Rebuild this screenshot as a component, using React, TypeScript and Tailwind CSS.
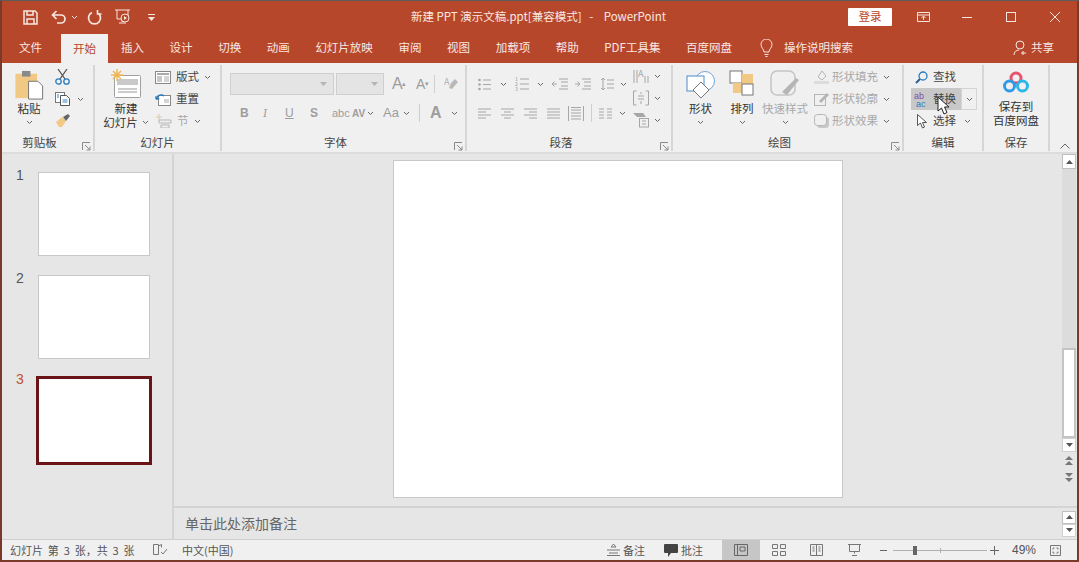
import type { ReactNode } from "react";

const TABS = ["插入", "设计", "切换", "动画", "幻灯片放映", "审阅", "视图", "加载项", "帮助", "PDF工具集", "百度网盘"];

function Chev({ className = "" }: { className?: string }) {
  return (
    <svg width="7" height="5" viewBox="0 0 7 5" className={className}>
      <path d="M1 1l2.500 2.500L6 1" fill="none" stroke="#666" strokeWidth="1" />
    </svg>
  );
}

function Launcher() {
  return (
    <svg width="9" height="9" viewBox="0 0 9 9" className="shrink-0">
      <path d="M.5 8V.5H8M3 3l5 5M8 4.500V8H4.500" fill="none" stroke="#8a8a8a" strokeWidth="1" />
    </svg>
  );
}

function Group({ w, label, launcher, children }: { w: string; label: string; launcher?: boolean; children: ReactNode }) {
  return (
    <div className={`${w} h-full shrink-0 flex flex-col border-r-2 border-[#d6d6d6]`}>
      <div className="h-[70px] shrink-0 flex">{children}</div>
      <div className={`h-[16px] shrink-0 flex items-center text-[11.5px] text-[#444] relative justify-center ${launcher ? "pr-[16px]" : ""}`}>
        {label}
        {launcher && (
          <span className="absolute right-[2px] top-[7px] flex">
            <Launcher />
          </span>
        )}
      </div>
    </div>
  );
}

function SmallRow({ icon, text, chev, dim, className = "" }: { icon: ReactNode; text?: string; chev?: boolean; dim?: boolean; className?: string }) {
  return (
    <div className={`h-[22px] flex items-center gap-[3px] text-[11.5px] ${dim ? "text-[#a8a8a8]" : "text-[#444]"} ${className}`}>
      {icon}
      {text && <span>{text}</span>}
      {chev && <Chev className="ml-[2px]" />}
    </div>
  );
}

function Lines({ kind }: { kind: "left" | "center" | "right" | "justify" }) {
  const rows = {
    left: "M0 1h13M0 4h8M0 7h13M0 10h8",
    center: "M0 1h13M3 4h7M0 7h13M3 10h7",
    right: "M0 1h13M5 4h8M0 7h13M5 10h8",
    justify: "M0 1h13M0 4h13M0 7h13M0 10h13",
  };
  return (
    <svg width="13" height="11" viewBox="0 0 13 11">
      <path d={rows[kind]} stroke="#a6a6a6" strokeWidth="1" fill="none" />
    </svg>
  );
}

function FontGroup() {
  return (
    <Group w="w-[245px]" label="字体" launcher>
      <div className="flex flex-col pl-[8px] pt-[7px]">
        <div className="flex items-center h-[24px]">
          <div className="w-[104px] h-[22px] bg-[#e4e4e4] border border-[#cfcfcf] flex items-center justify-end pr-[6px]">
            <svg width="7" height="4"><path d="M0 0h7L3.500 4z" fill="#b5b5b5" /></svg>
          </div>
          <div className="w-[48px] h-[22px] ml-[2px] bg-[#e4e4e4] border border-[#cfcfcf] flex items-center justify-end pr-[5px]">
            <svg width="7" height="4"><path d="M0 0h7L3.500 4z" fill="#b5b5b5" /></svg>
          </div>
          <span className="ml-[8px] w-[24px] text-[16px] text-[#9d9d9d] leading-none font-['Liberation_Sans',sans-serif]">A<sup className="text-[7px] -ml-px">▴</sup></span>
          <span className="w-[18px] text-[14px] text-[#9d9d9d] leading-none font-['Liberation_Sans',sans-serif]">A<sup className="text-[7px]">▾</sup></span>
          <span className="w-px h-[18px] bg-[#cfcfcf]" />
          <svg width="16" height="16" viewBox="0 0 16 16" className="ml-[8px]">
            <path d="M8 7l4-4 3 3-6 7-3-1z" fill="#b9b9b9" />
            <text x="1" y="9" fontSize="9" fill="#b0b0b0">A</text>
          </svg>
        </div>
        <div className="flex items-center h-[24px] mt-[5px] text-[#9d9d9d] text-[12px] font-['Liberation_Sans',sans-serif]">
          <b className="ml-[10px] w-[23px]">B</b>
          <i className="w-[22px] font-serif">I</i>
          <u className="w-[25px]">U</u>
          <b className="w-[22px]">S</b>
          <span className="w-[20px] text-[11px]">abc</span>
          <span className="w-[14px] text-[10px] font-bold">AV</span>
          <Chev className="ml-[1px]" />
          <span className="ml-[9px] w-[19px] text-[13px]">Aa</span>
          <Chev className="ml-px" />
          <span className="w-px h-[18px] bg-[#cfcfcf] ml-[9px]" />
          <span className="ml-[10px] w-[16px] text-[16px] font-bold">A</span>
          <Chev className="ml-[5px]" />
        </div>
      </div>
    </Group>
  );
}

function ParagraphGroup() {
  const bullets = (
    <svg width="13" height="13" viewBox="0 0 13 13">
      <path d="M5 2h8M5 6.500h8M5 11h8" stroke="#a6a6a6" fill="none" />
      <circle cx="1.500" cy="2" r="1.300" fill="#a6a6a6" />
      <circle cx="1.500" cy="6.500" r="1.300" fill="#a6a6a6" />
      <circle cx="1.500" cy="11" r="1.300" fill="#a6a6a6" />
    </svg>
  );
  const numbered = (
    <svg width="14" height="16" viewBox="0 0 14 16">
      <path d="M5 3h9M5 8h9M5 13h9" stroke="#a6a6a6" fill="none" />
      <text x="0" y="5" fontSize="5" fill="#999">1</text>
      <text x="0" y="10" fontSize="5" fill="#999">2</text>
      <text x="0" y="15" fontSize="5" fill="#999">3</text>
    </svg>
  );
  return (
    <Group w="w-[206px]" label="段落" launcher>
      <div className="flex flex-col pl-[11px] pt-[9px] w-[166px]">
        <div className="flex items-center h-[20px]">
          {bullets}
          <Chev className="ml-[9px]" />
          <span className="w-[8px]" />
          {numbered}
          <Chev className="ml-[8px]" />
          <svg width="16" height="12" viewBox="0 0 16 12" className="ml-[8px]">
            <path d="M7 1h9M9 4h7M9 8h7M7 11h9M5 6H0M2.500 3.500L0 6l2.500 2.500" stroke="#a6a6a6" fill="none" />
          </svg>
          <svg width="16" height="12" viewBox="0 0 16 12" className="ml-[7px]">
            <path d="M7 1h9M9 4h7M9 8h7M7 11h9M0 6h5M2.500 3.500L5 6 2.500 8.500" stroke="#a6a6a6" fill="none" />
          </svg>
          <svg width="14" height="14" viewBox="0 0 14 14" className="ml-[9px]">
            <path d="M3 1v12M1 3l2-2 2 2M1 11l2 2 2-2M7 3h7M7 7h7M7 11h7" stroke="#a6a6a6" fill="none" />
          </svg>
          <Chev className="ml-[6px]" />
        </div>
        <div className="flex items-center h-[20px] mt-[9px]">
          <Lines kind="left" />
          <span className="ml-[10px] flex"><Lines kind="center" /></span>
          <span className="ml-[10px] flex"><Lines kind="right" /></span>
          <span className="ml-[10px] flex"><Lines kind="justify" /></span>
          <svg width="16" height="15" viewBox="0 0 16 15" className="ml-[8px]">
            <path d="M.5 0v15M15.500 0v15M3 4h10M3 7h10M3 10h10M3 13h10M3 1.500h10" stroke="#a6a6a6" fill="none" />
          </svg>
          <span className="w-px h-[18px] bg-[#cfcfcf] ml-[7px]" />
          <svg width="13" height="11" viewBox="0 0 13 11" className="ml-[7px]">
            <path d="M0 1h5M0 4h5M0 7h5M0 10h5M8 1h5M8 4h5M8 7h5M8 10h5" stroke="#a6a6a6" fill="none" />
          </svg>
          <Chev className="ml-[7px]" />
        </div>
      </div>
      <div className="flex flex-col">
        <div className="h-[22px] flex items-center">
          <svg width="16" height="16" viewBox="0 0 16 16">
            <path d="M1 2v13M4 2v13M12 8v7M15 8v7" stroke="#a6a6a6" fill="none" />
            <text x="5" y="9" fontSize="9" fill="#a6a6a6">A</text>
          </svg>
          <Chev className="ml-[5px]" />
        </div>
        <div className="h-[22px] flex items-center">
          <svg width="16" height="16" viewBox="0 0 16 16">
            <path d="M.5 1h3M.5 1v14h3M12.500 1h3v14h-3M5 6h6M5 9h6M8 2v2M8 11v3" stroke="#a6a6a6" fill="none" />
          </svg>
          <Chev className="ml-[5px]" />
        </div>
        <div className="h-[22px] flex items-center">
          <svg width="16" height="16" viewBox="0 0 16 16">
            <path d="M0 1h10l3 4H4z" fill="#a6a6a6" />
            <rect x="6.500" y="6.500" width="9" height="8.500" fill="none" stroke="#a6a6a6" />
            <path d="M9 9h4M9 12h4" stroke="#a6a6a6" />
          </svg>
          <Chev className="ml-[5px]" />
        </div>
      </div>
    </Group>
  );
}

export default function App() {
  return (
    <div className="w-[1079px] h-[562px] overflow-hidden bg-[#7a3a2a] border-t border-[#5c5c5c] px-[2px] pb-[2px] font-['Noto_Sans_CJK_SC',sans-serif] relative">
      <div className="h-full flex flex-col bg-[#e6e6e6]">
        {/* title bar */}
        <div className="h-[32px] shrink-0 bg-[#b7472a] flex items-center text-white text-[11.5px] relative">
          <div className="w-[409px] flex items-center pl-[21px] shrink-0">
            <svg width="15" height="15" viewBox="0 0 15 15">
              <path d="M1 1h11l2 2v11H1zM4 1v4h6V1M4 14V9h7v5" fill="none" stroke="#f6e6e0" strokeWidth="1.500" />
            </svg>
            <svg width="16" height="14" viewBox="0 0 16 14" className="ml-[13px]">
              <path d="M2 5h8a4 4 0 0 1 0 8H6M5.500 1L1.500 5l4 4" fill="none" stroke="#f6e6e0" strokeWidth="1.700" />
            </svg>
            <svg width="7" height="5" viewBox="0 0 7 5" className="ml-[4px]"><path d="M1 1l2.500 2.500L6 1" fill="none" stroke="#f6e6e0" /></svg>
            <svg width="15" height="15" viewBox="0 0 15 15" className="ml-[9px]">
              <path d="M5 2.500a6 6 0 1 0 5 0M10.500 0v4h4" fill="none" stroke="#f6e6e0" strokeWidth="1.700" />
            </svg>
            <svg width="17" height="17" viewBox="0 0 17 17" className="ml-[13px]">
              <path d="M0 1h15M2 1v9h11V1M7 10v3M4 14h7" fill="none" stroke="#f6e6e0" />
              <circle cx="10" cy="9" r="4" fill="#b7472a" stroke="#f6e6e0" />
              <path d="M9 7l3 2-3 2z" fill="#f6e6e0" />
            </svg>
            <svg width="7" height="7" viewBox="0 0 7 7" className="ml-[16px]">
              <path d="M0 0h7v1H0zM0 3h7L3.500 7z" fill="#f6e6e0" />
            </svg>
          </div>
          <span className="text-[#f7e8e3] whitespace-pre">新建 PPT 演示文稿.ppt[兼容模式]   -    PowerPoint</span>
          <div className="ml-auto flex items-center pr-[17px]">
            <span className="w-[44px] h-[18px] bg-white text-[#b7472a] rounded-[1px] flex items-center justify-center mr-[25px]">登录</span>
            <svg width="13" height="10" viewBox="0 0 13 10">
              <path d="M.5.500h12v9H.5zM.5 3h12M6.500 8V4.500M4.500 6l2-2 2 2" fill="none" stroke="#f6e6e0" />
            </svg>
            <svg width="10" height="1" className="ml-[32px]"><rect width="10" height="1" fill="#f6e6e0" /></svg>
            <svg width="10" height="10" viewBox="0 0 10 10" className="ml-[34px]">
              <rect x=".5" y=".5" width="9" height="9" fill="none" stroke="#f6e6e0" />
            </svg>
            <svg width="10" height="10" viewBox="0 0 10 10" className="ml-[34px]">
              <path d="M0 0l10 10M10 0L0 10" stroke="#f6e6e0" />
            </svg>
          </div>
        </div>

        {/* tabs */}
        <div className="h-[30px] shrink-0 bg-[#b7472a] flex items-end text-[11.5px] text-[#f7e8e3] relative">
          <div className="h-[30px] pl-[17px] w-[59px] flex items-center shrink-0">文件</div>
          <div className="h-[29px] w-[47px] bg-[#f0f0f0] text-[#b7472a] flex items-center justify-center shrink-0">开始</div>
          <div className="h-[30px] flex items-center gap-[25.6px] pl-[13px]">
            {TABS.map((t) => (
              <span key={t} className="whitespace-nowrap">{t}</span>
            ))}
          </div>
          <div className="h-[30px] flex items-center ml-[28px]">
            <svg width="13" height="18" viewBox="0 0 13 18">
              <path d="M4 13c0-3-3-4-3-7.500a5.500 5.500 0 0 1 11 0C12 9 9 10 9 13zM4.500 15.500h4M5.500 17.500h2" fill="none" stroke="#f7e8e3" />
            </svg>
            <span className="ml-[11px]">操作说明搜索</span>
          </div>
          <div className="h-[30px] flex items-center ml-auto pr-[23px]">
            <svg width="15" height="16" viewBox="0 0 15 16">
              <circle cx="7" cy="5" r="4" fill="none" stroke="#f7e8e3" />
              <path d="M1 15c0-3 2-5 5-5M10 11v4M8 13h5" fill="none" stroke="#f7e8e3" />
            </svg>
            <span className="ml-[3px]">共享</span>
          </div>
        </div>

        {/* ribbon */}
        <div className="h-[91px] shrink-0 bg-[#f0f0f0] flex border-b-2 border-[#dcdcdc] pt-[2px] pb-px relative">
          <Group w="w-[93px]" label="剪贴板" launcher>
            <div className="w-[48px] flex flex-col items-center pl-[6px] pt-[5px]">
              <svg width="29" height="30" viewBox="0 0 30 32">
                <rect x="0" y="4" width="23" height="26" fill="#f1c884" />
                <rect x="7" y="1" width="9" height="6" fill="#8a8a8a" />
                <path d="M14 12h10l5 5v14H14z" fill="#fff" stroke="#6f6f6f" />
              </svg>
              <span className="text-[11.5px] text-[#333] leading-[16px]">粘贴</span>
              <Chev className="mt-[4px]" />
            </div>
            <div className="flex flex-col pl-[5px] pt-px">
              <SmallRow icon={
                <svg width="15" height="16" viewBox="0 0 15 16">
                  <path d="M3 0l7 10M12 0L5 10" stroke="#555" strokeWidth="1.300" />
                  <circle cx="3.500" cy="12.500" r="2.700" fill="none" stroke="#2b7cc0" strokeWidth="1.300" />
                  <circle cx="11.500" cy="12.500" r="2.700" fill="none" stroke="#2b7cc0" strokeWidth="1.300" />
                </svg>
              } />
              <SmallRow chev icon={
                <svg width="15" height="14" viewBox="0 0 15 14" className="mr-[2px]">
                  <rect x=".5" y=".5" width="9" height="10" fill="#fff" stroke="#777" />
                  <path d="M5.500 3.500h6l3 3v7h-9z" fill="#fff" stroke="#555" />
                  <path d="M2 3h2M2 5h2M7.500 8h5M7.500 10h5" stroke="#3a87c8" />
                </svg>
              } />
              <SmallRow icon={
                <svg width="16" height="14" viewBox="0 0 16 14">
                  <path d="M1 8l6-5 4 4-4 6H4z" fill="#f1c884" />
                  <path d="M8 3l5-3 2 2-4 5z" fill="#666" />
                </svg>
              } />
            </div>
          </Group>

          <Group w="w-[127px]" label="幻灯片" launcher={false}>
            <div className="w-[60px] flex flex-col items-center pl-[2px] pt-[4px]">
              <svg width="30" height="30" viewBox="0 0 30 30">
                <rect x="3.500" y="6.500" width="26" height="22" rx="1" fill="#fff" stroke="#a0a0a0" />
                <rect x="6" y="10" width="21" height="6" fill="#c9c9c9" />
                <path d="M7 20h19M7 23h19" stroke="#999" />
                <path d="M6 0v12M0 6h12M2 2l8 8M10 2l-8 8" stroke="#efb655" strokeWidth="1.500" />
              </svg>
              <span className="text-[11.5px] text-[#333] leading-[14px] mt-[2px]">新建</span>
              <span className="text-[11.5px] text-[#333] leading-[14px] whitespace-nowrap flex items-center">幻灯片<Chev className="ml-[4px]" /></span>
            </div>
            <div className="flex flex-col pt-px">
              <SmallRow text="版式" chev icon={
                <svg width="16" height="13" viewBox="0 0 16 13" className="mr-[2px]">
                  <rect x=".5" y=".5" width="15" height="12" fill="#fff" stroke="#888" />
                  <rect x="2" y="2" width="12" height="2" fill="#aaa" />
                  <rect x="2" y="5" width="5" height="6" fill="#c8c8c8" />
                  <path d="M9 6h5M9 8h5M9 10h5" stroke="#aaa" />
                </svg>
              } />
              <SmallRow text="重置" icon={
                <svg width="16" height="13" viewBox="0 0 16 13" className="mr-[2px]">
                  <rect x="3.500" y="2.500" width="12" height="10" fill="#fff" stroke="#888" />
                  <path d="M1 6c1-4 6-5 8-3" fill="none" stroke="#2b7cc0" strokeWidth="1.500" />
                  <path d="M0 3l1 4 4-1z" fill="#2b7cc0" />
                  <path d="M9 7h5M9 9h5" stroke="#aaa" />
                </svg>
              } />
              <SmallRow dim text="节" chev icon={
                <svg width="17" height="14" viewBox="0 0 17 14" className="mr-[2px]">
                  <path d="M4 0v6M1 3h6" stroke="#d8c9a8" />
                  <path d="M4 6h12v3H4zM6 11h8v3H6z" fill="none" stroke="#b5b5b5" />
                </svg>
              } />
            </div>
          </Group>

          <FontGroup />
          <ParagraphGroup />

          <Group w="w-[231px]" label="绘图" launcher>
            <div className="w-[52px] flex flex-col items-center pl-[3px] pt-[5px]">
              <svg width="30" height="30" viewBox="0 0 30 30">
                <circle cx="19" cy="11" r="9.500" fill="#fff" stroke="#6ea6d8" />
                <rect x="1" y="6" width="17" height="15" fill="#fff" stroke="#4d8ccc" />
                <path d="M15 12l8 8-8 8-8-8z" fill="#fff" stroke="#777" />
              </svg>
              <span className="text-[11.5px] text-[#333] leading-[16px]">形状</span>
              <Chev className="mt-[4px]" />
            </div>
            <div className="w-[34px] flex flex-col items-center pt-[5px]">
              <svg width="26" height="30" viewBox="0 0 26 30">
                <rect x="1" y="1" width="12" height="12" fill="#fff" stroke="#777" />
                <rect x="13" y="4" width="11" height="10" fill="#f1c884" />
                <rect x="4" y="13" width="9" height="10" fill="#f1c884" />
                <rect x="13" y="14" width="11" height="11" fill="#fff" stroke="#777" />
              </svg>
              <span className="text-[11.5px] text-[#333] leading-[16px]">排列</span>
              <Chev className="mt-[4px]" />
            </div>
            <div className="w-[52px] flex flex-col items-center pt-[5px]">
              <svg width="30" height="30" viewBox="0 0 30 30">
                <rect x="1" y="1" width="24" height="24" rx="6" fill="none" stroke="#c4c4c4" strokeWidth="1.500" />
                <path d="M12 22l14-14 3 2-12 15z" fill="#b5b5b5" />
              </svg>
              <span className="text-[11.5px] text-[#a8a8a8] leading-[16px] whitespace-nowrap">快速样式</span>
              <Chev className="mt-[4px]" />
            </div>
            <div className="flex flex-col pl-[3px] pt-px">
              <SmallRow dim text="形状填充" chev icon={
                <svg width="15" height="14" viewBox="0 0 15 14">
                  <path d="M4 7l4-6 4 5-4 4z" fill="none" stroke="#b5b5b5" />
                  <rect x="0" y="11" width="15" height="3" fill="#dcdcdc" />
                </svg>
              } />
              <SmallRow dim text="形状轮廓" chev icon={
                <svg width="15" height="14" viewBox="0 0 15 14">
                  <rect x=".5" y="2.500" width="11" height="11" fill="none" stroke="#b5b5b5" />
                  <path d="M5 9l8-8 2 2-8 8z" fill="#b5b5b5" />
                </svg>
              } />
              <SmallRow dim text="形状效果" chev icon={
                <svg width="15" height="14" viewBox="0 0 15 14">
                  <rect x="3" y="3" width="12" height="11" rx="3" fill="#c8c8c8" />
                  <rect x=".5" y=".5" width="12" height="11" rx="3" fill="#f0f0f0" stroke="#b5b5b5" />
                </svg>
              } />
            </div>
          </Group>

          <Group w="w-[80px]" label="编辑">
            <div className="flex flex-col pl-[7px] pt-px w-full">
              <SmallRow text="查找" className="pl-[4px] gap-[5px]" icon={
                <svg width="13" height="13" viewBox="0 0 13 13">
                  <circle cx="8" cy="5" r="4" fill="none" stroke="#2b7cc0" strokeWidth="1.300" />
                  <path d="M5 8l-4 4" stroke="#2b5f95" strokeWidth="2" />
                </svg>
              } />
              <div className="flex h-[22px] w-[66px]">
                <div className="w-[50px] bg-[#c8c8c8] flex items-center text-[11.5px] text-[#444] gap-[4px] pl-[3px]">
                  <svg width="15" height="17" viewBox="0 0 15 17">
                    <text x="0" y="8" fontSize="9" fill="#7b4fa8" fontFamily="Liberation Sans">ab</text>
                    <text x="2" y="16" fontSize="9" fill="#2b7cc0" fontFamily="Liberation Sans">ac</text>
                  </svg>
                  <span>替换</span>
                </div>
                <div className="flex-1 border border-[#d4d4d4] flex items-center justify-center">
                  <Chev />
                </div>
              </div>
              <SmallRow text="选择" chev className="pl-[6px] gap-[6px]" icon={
                <svg width="10" height="15" viewBox="0 0 10 15">
                  <path d="M.5.500v11l3-2.500 2 5 2-1-2-4.500h4z" fill="#fff" stroke="#555" />
                </svg>
              } />
            </div>
          </Group>

          <Group w="w-[66px]" label="保存">
            <div className="w-full flex flex-col items-center pt-[6px]">
              <svg width="26" height="23" viewBox="0 0 26 23">
                <circle cx="13" cy="7" r="5" fill="none" stroke="#e9536b" strokeWidth="3" />
                <circle cx="6.500" cy="15" r="5" fill="none" stroke="#2f9be8" strokeWidth="3" />
                <circle cx="19.500" cy="15" r="5" fill="none" stroke="#2bb8e8" strokeWidth="3" />
              </svg>
              <span className="text-[11.5px] text-[#333] leading-[14px] mt-[5px]">保存到</span>
              <span className="text-[11.5px] text-[#333] leading-[15px]">百度网盘</span>
            </div>
          </Group>

          <div className="flex-1 flex items-end justify-center pb-[2px] pl-[2px]">
            <svg width="10" height="6" viewBox="0 0 10 6"><path d="M.5 5.500L5 1l4.500 4.500" fill="none" stroke="#666" /></svg>
          </div>
          <svg width="16" height="20" viewBox="0 0 16 20" className="absolute left-[935px] top-[33px]">
            <path d="M1 1v14l3.500-3 2.500 6 3-1.500-2.500-5.500H12z" fill="#fff" stroke="#222" />
          </svg>
        </div>

        {/* main area */}
        <div className="flex-1 min-h-0 flex">
          <div className="w-[172px] shrink-0 border-r-2 border-[#d4d4d4] pt-[18px] pl-[13px] flex flex-col text-[14px] text-[#555]">
            <div className="flex h-[103px]">
              <span className="w-[23px] pl-px leading-[8px] font-['Liberation_Sans',sans-serif] -mt-px">1</span>
              <div className="w-[112px] h-[84px] bg-white border border-[#c8c8c8]" />
            </div>
            <div className="flex h-[101px]">
              <span className="w-[23px] pl-px leading-[8px] font-['Liberation_Sans',sans-serif] -mt-px">2</span>
              <div className="w-[112px] h-[84px] bg-white border border-[#c8c8c8]" />
            </div>
            <div className="flex">
              <span className="w-[21px] pl-px leading-[8px] text-[#c0522f] font-['Liberation_Sans',sans-serif] -mt-px">3</span>
              <div className="w-[116px] h-[89px] bg-white border-[3px] border-[#6a1418]" />
            </div>
          </div>

          <div className="flex-1 min-w-0 flex flex-col">
            <div className="flex-1 min-h-0 flex">
              <div className="flex-1 flex justify-center pt-[6px] pr-px">
                <div className="w-[450px] h-[338px] bg-white border border-[#c8c8c8]" />
              </div>
              <div className="w-[14px] shrink-0 flex flex-col items-center mr-px">
                <div className="w-[14px] h-[15px] bg-white border border-[#c0c0c0] flex items-center justify-center">
                  <svg width="7" height="4"><path d="M3.500 0L7 4H0z" fill="#555" /></svg>
                </div>
                <div className="w-[14px] h-[179px] bg-[#dcdcdc]" />
                <div className="w-[14px] h-[90px] bg-white border-2 border-[#c4c4c4]" />
                <div className="w-[14px] h-[14px] bg-white border border-[#d0d0d0] flex items-center justify-center">
                  <svg width="7" height="4"><path d="M0 0h7L3.500 4z" fill="#555" /></svg>
                </div>
                <svg width="8" height="10" viewBox="0 0 8 10" className="mt-[4px]">
                  <path d="M4 0l4 4H0zM4 5l4 4H0z" fill="#777" />
                </svg>
                <svg width="8" height="10" viewBox="0 0 8 10" className="mt-[7px]">
                  <path d="M0 0h8L4 4zM0 5h8L4 9z" fill="#777" />
                </svg>
              </div>
            </div>
            <div className="h-[33px] shrink-0 border-t-2 border-[#d4d4d4] flex items-center text-[14px] text-[#666] pl-[11px]">
              <span>单击此处添加备注</span>
              <div className="ml-auto flex flex-col mr-px">
                <div className="w-[14px] h-[13px] bg-white border border-[#c0c0c0] flex items-center justify-center">
                  <svg width="7" height="4"><path d="M3.500 0L7 4H0z" fill="#555" /></svg>
                </div>
                <div className="w-[14px] h-[13px] bg-white border border-[#d0d0d0] flex items-center justify-center">
                  <svg width="7" height="4"><path d="M0 0h7L3.500 4z" fill="#555" /></svg>
                </div>
              </div>
            </div>
          </div>
        </div>

        {/* status bar */}
        <div className="h-[21px] shrink-0 bg-[#f0f0f0] border-t border-[#cfcfcf] flex items-center text-[11px] text-[#555]">
          <span className="pl-[8px] w-[151px] whitespace-pre shrink-0 [word-spacing:2.4px]">幻灯片 第 3 张，共 3 张</span>
          <svg width="14" height="12" viewBox="0 0 14 12" className="shrink-0">
            <path d="M.5.500h5v10h-5zM5.500 2l3-1.500v3M8 8l2 2 4-5" fill="none" stroke="#777" />
          </svg>
          <span className="ml-[15px]">中文(中国)</span>
          <div className="ml-auto flex items-center h-full">
            <svg width="13" height="12" viewBox="0 0 13 12">
              <path d="M4 3l2.500-3L9 3zM0 6h13M2 9h9M0 11.500h13" fill="none" stroke="#777" />
            </svg>
            <span className="ml-[3px]">备注</span>
            <svg width="14" height="13" viewBox="0 0 14 13" className="ml-[19px]">
              <path d="M1 0h12a1 1 0 0 1 1 1v7a1 1 0 0 1-1 1H7l-3 4V9H1a1 1 0 0 1-1-1V1a1 1 0 0 1 1-1z" fill="#444" />
            </svg>
            <span className="ml-[3px]">批注</span>
            <div className="ml-[19px] w-[38px] h-full bg-[#c6c6c6] flex items-center justify-center">
              <svg width="14" height="12" viewBox="0 0 14 12">
                <path d="M.5.500h13v11H.5zM3.500.500v11M6 3h5v4H6z" fill="none" stroke="#666" />
              </svg>
            </div>
            <svg width="14" height="12" viewBox="0 0 14 12" className="ml-[12px]">
              <path d="M.5.500h5v4h-5zM8.500.500h5v4h-5zM.5 7.500h5v4h-5zM8.500 7.500h5v4h-5z" fill="none" stroke="#777" />
            </svg>
            <svg width="13" height="12" viewBox="0 0 13 12" className="ml-[24px]">
              <path d="M.5.500h12v11H.5zM6.500.500v11M2.500 3h2M2.500 5h2M2.500 7h2M8.500 3h2M8.500 5h2M8.500 7h2" fill="none" stroke="#777" />
            </svg>
            <svg width="13" height="12" viewBox="0 0 13 12" className="ml-[25px]">
              <path d="M0 .500h13M1.500.500v7h10v-7M6.500 7.500v2M4 11.500h5" fill="none" stroke="#777" />
            </svg>
            <svg width="7" height="1" className="ml-[19px]"><rect width="7" height="1" fill="#666" /></svg>
            <div className="ml-[6px] w-[94px] h-px bg-[#b0b0b0] flex items-center">
              <span className="w-[4px] h-[9px] bg-[#666] ml-[20px]" />
              <span className="w-px h-[5px] bg-[#b0b0b0] ml-[23px]" />
            </div>
            <svg width="9" height="9" viewBox="0 0 9 9" className="ml-[3px]"><path d="M4.500 0v9M0 4.500h9" stroke="#666" /></svg>
            <span className="ml-[13px] w-[24px] font-['Liberation_Sans',sans-serif] text-[12px] whitespace-nowrap">49%</span>
            <svg width="11" height="11" viewBox="0 0 11 11" className="ml-[14px] mr-[16px]">
              <path d="M.5.500h10v10H.5zM3 3h1.500M3 3v1.500M8 3H6.500M8 3v1.500M3 8h1.500M3 8V6.500M8 8H6.500M8 8V6.500" fill="none" stroke="#777" />
            </svg>
          </div>
        </div>
      </div>
    </div>
  );
}
